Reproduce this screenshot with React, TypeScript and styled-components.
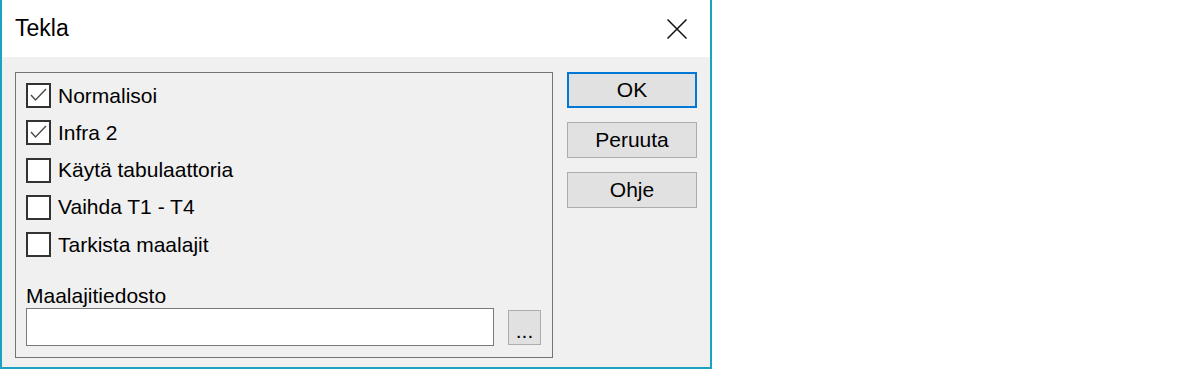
import styled, { createGlobalStyle } from "styled-components";

const GlobalStyle = createGlobalStyle`
  body {
    margin: 0;
    background: #fff;
    font-family: "Liberation Sans", Arial, sans-serif;
  }
`;

const options = [
  { label: "Normalisoi", checked: true },
  { label: "Infra 2", checked: true },
  { label: "Käytä tabulaattoria", checked: false },
  { label: "Vaihda T1 - T4", checked: false },
  { label: "Tarkista maalajit", checked: false },
];

const CheckMark = () => (
  <svg width="21" height="21" viewBox="0 0 21 21">
    <path d="M3 10 L7.5 15 L18 4" fill="none" stroke="#4a4a4a" strokeWidth="1.4" />
  </svg>
);

const CloseIcon = () => (
  <svg width="20" height="20" viewBox="0 0 20 20">
    <path d="M0.5 0.5 L19.5 19.5 M19.5 0.5 L0.5 19.5" stroke="#111" strokeWidth="1.5" />
  </svg>
);

const App = () => {
  return (
    <>
      <GlobalStyle />
      <Window>
        <TitleBar>
          <span>Tekla</span>
          <CloseButton>
            <CloseIcon />
          </CloseButton>
        </TitleBar>

        <Content>
          <GroupBox>
            <OptionList>
              {options.map((option) => (
                <OptionRow key={option.label}>
                  <CheckBox>{option.checked && <CheckMark />}</CheckBox>
                  <span>{option.label}</span>
                </OptionRow>
              ))}
            </OptionList>

            <FileSection>
              <FieldLabel>Maalajitiedosto</FieldLabel>
              <FileRow>
                <FileInput />
                <BrowseButton>...</BrowseButton>
              </FileRow>
            </FileSection>
          </GroupBox>

          <ButtonColumn>
            <DialogButton $primary>OK</DialogButton>
            <DialogButton>Peruuta</DialogButton>
            <DialogButton>Ohje</DialogButton>
          </ButtonColumn>
        </Content>
      </Window>
    </>
  );
};

export default App;

const Window = styled.div`
  width: 712px;
  height: 369px;
  box-sizing: border-box;
  border: 2px solid #1ba1c2;
  border-top: none;
  display: flex;
  flex-direction: column;
  background: #f0f0f0;
  color: #000;
  font-size: 21px;
`;

const TitleBar = styled.div`
  height: 57px;
  flex: none;
  background: #fff;
  display: flex;
  align-items: center;
  justify-content: space-between;
  padding: 0 23px 0 13px;
  font-size: 23px;
`;

const CloseButton = styled.div`
  display: flex;
  align-items: center;
  width: 20px;
  height: 20px;
`;

const Content = styled.div`
  flex: 1;
  display: flex;
  gap: 14px;
  padding: 15px 13px 9px;
`;

const GroupBox = styled.div`
  width: 538px;
  box-sizing: border-box;
  border: 1px solid #747474;
  display: flex;
  flex-direction: column;
  padding: 4px 11px 11px 10px;
`;

const OptionList = styled.div`
  display: flex;
  flex-direction: column;
`;

const OptionRow = styled.div`
  height: 37.25px;
  display: flex;
  align-items: center;
  gap: 7px;
  line-height: 24px;
`;

const CheckBox = styled.div`
  width: 25px;
  height: 25px;
  box-sizing: border-box;
  border: 2px solid #333;
  background: #fff;
  display: flex;
  align-items: center;
  justify-content: center;
`;

const FileSection = styled.div`
  margin-top: auto;
  display: flex;
  flex-direction: column;
`;

const FieldLabel = styled.div`
  line-height: 24px;
`;

const FileRow = styled.div`
  display: flex;
  align-items: center;
  gap: 14px;
`;

const FileInput = styled.div`
  width: 468px;
  height: 38px;
  box-sizing: border-box;
  border: 1px solid #7a7a7a;
  background: #fff;
`;

const BrowseButton = styled.div`
  width: 33px;
  height: 35px;
  box-sizing: border-box;
  border: 1px solid #adadad;
  background: #e1e1e1;
  display: flex;
  align-items: center;
  justify-content: center;
  line-height: 24px;
  padding-top: 8px;
`;

const ButtonColumn = styled.div`
  width: 130px;
  display: flex;
  flex-direction: column;
  gap: 14px;
`;

const DialogButton = styled.div<{ $primary?: boolean }>`
  height: 36px;
  box-sizing: border-box;
  border: ${({ $primary }) => ($primary ? "2px solid #0078d7" : "1px solid #adadad")};
  background: #e1e1e1;
  display: flex;
  align-items: center;
  justify-content: center;
  line-height: 24px;
`;
